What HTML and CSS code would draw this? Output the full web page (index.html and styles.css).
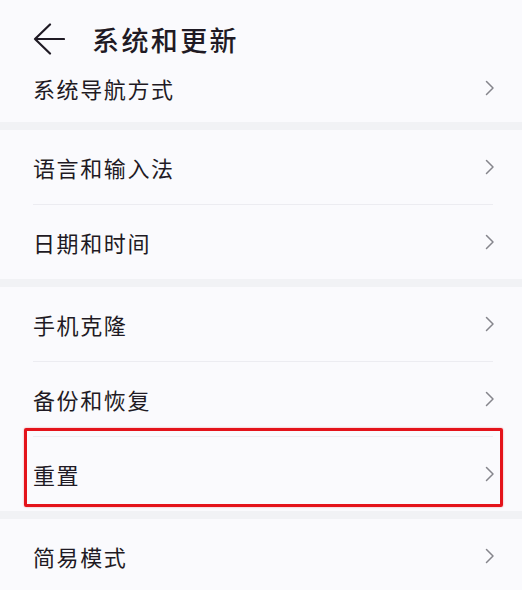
FILE: index.html
```html
<!DOCTYPE html>
<html lang="zh-CN">
<head>
<meta charset="utf-8">
<title>系统和更新</title>
<link rel="stylesheet" href="styles.css">
</head>
<body>
<div class="page">
  <header class="header">
    <svg class="back" width="32" height="32" viewBox="0 0 32 32" aria-hidden="true">
      <path d="M31 16 H2 M17 1.5 L2 16 L17 30.5" fill="none" stroke="#1f1a24" stroke-width="2.2" stroke-linecap="round" stroke-linejoin="round"/>
    </svg>
    <h1 class="title">系统和更新</h1>
  </header>

  <section class="card card-first">
    <div class="row row-top">
      <span class="label">系统导航方式</span>
      <svg class="chev" width="10" height="16" viewBox="0 0 10 16"><path d="M1.5 1.5 L8 8 L1.5 14.5" fill="none" stroke="#85858c" stroke-width="1.5" stroke-linecap="round" stroke-linejoin="round"/></svg>
    </div>
  </section>

  <section class="card">
    <div class="row">
      <span class="label">语言和输入法</span>
      <svg class="chev" width="10" height="16" viewBox="0 0 10 16"><path d="M1.5 1.5 L8 8 L1.5 14.5" fill="none" stroke="#85858c" stroke-width="1.5" stroke-linecap="round" stroke-linejoin="round"/></svg>
    </div>
    <div class="divider"></div>
    <div class="row">
      <span class="label">日期和时间</span>
      <svg class="chev" width="10" height="16" viewBox="0 0 10 16"><path d="M1.5 1.5 L8 8 L1.5 14.5" fill="none" stroke="#85858c" stroke-width="1.5" stroke-linecap="round" stroke-linejoin="round"/></svg>
    </div>
  </section>

  <section class="card">
    <div class="row">
      <span class="label">手机克隆</span>
      <svg class="chev" width="10" height="16" viewBox="0 0 10 16"><path d="M1.5 1.5 L8 8 L1.5 14.5" fill="none" stroke="#85858c" stroke-width="1.5" stroke-linecap="round" stroke-linejoin="round"/></svg>
    </div>
    <div class="divider"></div>
    <div class="row">
      <span class="label">备份和恢复</span>
      <svg class="chev" width="10" height="16" viewBox="0 0 10 16"><path d="M1.5 1.5 L8 8 L1.5 14.5" fill="none" stroke="#85858c" stroke-width="1.5" stroke-linecap="round" stroke-linejoin="round"/></svg>
    </div>
    <div class="divider"></div>
    <div class="row row-highlight">
      <span class="label">重置</span>
      <svg class="chev" width="10" height="16" viewBox="0 0 10 16"><path d="M1.5 1.5 L8 8 L1.5 14.5" fill="none" stroke="#85858c" stroke-width="1.5" stroke-linecap="round" stroke-linejoin="round"/></svg>
      <span class="mark" aria-hidden="true"></span>
    </div>
  </section>

  <section class="card">
    <div class="row">
      <span class="label">简易模式</span>
      <svg class="chev" width="10" height="16" viewBox="0 0 10 16"><path d="M1.5 1.5 L8 8 L1.5 14.5" fill="none" stroke="#85858c" stroke-width="1.5" stroke-linecap="round" stroke-linejoin="round"/></svg>
    </div>
  </section>
</div>
</body>
</html>
```

FILE: styles.css
```css
html, body {
  margin: 0;
  padding: 0;
}

body {
  background: #f1f2f5;
  font-family: "Noto Sans CJK SC", "Noto Sans", sans-serif;
  color: #1f1a24;
  width: 522px;
  height: 590px;
  overflow: hidden;
}

.page {
  display: flex;
  flex-direction: column;
  gap: 8px;
}

.header {
  display: flex;
  align-items: center;
  height: 76px;
  padding: 2px 0 0 33px;
  background: #fafafd;
  box-sizing: border-box;
  margin-bottom: -8px;
}

.back {
  display: block;
  flex: none;
}

.title {
  margin: 0 0 0 27px;
  font-size: 27px;
  font-weight: 500;
  letter-spacing: 2.4px;
  line-height: 1;
}

.card {
  background: #fafafd;
  display: flex;
  flex-direction: column;
}

.row {
  position: relative;
  display: flex;
  align-items: center;
  justify-content: space-between;
  height: 74px;
  padding: 0 27px 0 33px;
}

.row-top {
  height: 46px;
  align-items: flex-start;
  padding-top: 1px;
  box-sizing: border-box;
}

.row-top .chev {
  margin-top: 3px;
}

.label {
  font-size: 22px;
  font-weight: 400;
  letter-spacing: 1.6px;
  line-height: 22px;
}

.chev {
  display: block;
  flex: none;
}

.divider {
  height: 1px;
  margin: 0 29px 0 33px;
  background: #ececf1;
}

.mark {
  position: absolute;
  left: 24px;
  right: 19px;
  top: -9px;
  bottom: 4px;
  border: 3px solid #e4131b;
  border-radius: 2px;
  box-shadow: 0 0 2px rgba(228, 19, 27, 0.45);
  pointer-events: none;
}
```
